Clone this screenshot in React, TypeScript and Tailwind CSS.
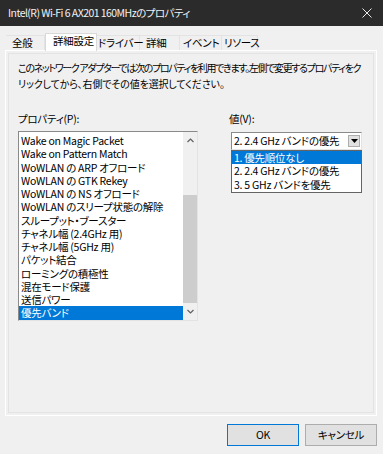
import React from "react";

const properties = [
  "Wake on Magic Packet",
  "Wake on Pattern Match",
  "WoWLAN の ARP オフロード",
  "WoWLAN の GTK Rekey",
  "WoWLAN の NS オフロード",
  "WoWLAN のスリープ状態の解除",
  "スループット・ブースター",
  "チャネル幅 (2.4GHz 用)",
  "チャネル幅 (5GHz 用)",
  "パケット結合",
  "ローミングの積極性",
  "混在モード保護",
  "送信パワー",
  "優先バンド",
];

const options = ["1. 優先順位なし", "2. 2.4 GHz バンドの優先", "3. 5 GHz バンドを優先"];

const tabs = [
  { label: "全般", w: "w-[39px]", pl: "pl-[6px]" },
  { label: "詳細設定", w: "w-[52px]", pl: "pl-[7px]", active: true },
  { label: "ドライバー", w: "w-[43px]", pl: "pl-[1px]" },
  { label: "詳細", w: "w-[40px]", pl: "pl-[6px]" },
  { label: "イベント", w: "w-[42px]", pl: "pl-[3px]" },
  { label: "リソース", w: "w-[36px]", pl: "pl-[2px]" },
];

function Chevron({ up }: { up?: boolean }) {
  return (
    <svg width="7" height="5" viewBox="0 0 7 5" className="block">
      <path
        d={up ? "M0.5 4 L3.5 1 L6.5 4" : "M0.5 1 L3.5 4 L6.5 1"}
        fill="none"
        stroke="#606060"
        strokeWidth="1.2"
      />
    </svg>
  );
}

export default function App() {
  return (
    <div className="w-[383px] h-[454px] bg-[#f0f0f0] flex flex-col overflow-hidden font-['Noto_Sans_CJK_JP',sans-serif] [font-feature-settings:'palt'] text-[10.5px] tracking-[-0.25px] text-black">
      {/* Title bar */}
      <div className="h-[26px] shrink-0 bg-[#2b2b2b] flex items-center justify-between pl-[8px] pr-[11px] text-[#f2f2f2] text-[10.5px] tracking-[-0.55px]">
        <span className="whitespace-nowrap">Intel(R) Wi-Fi 6 AX201 160MHzのプロパティ</span>
        <svg width="10" height="10" viewBox="0 0 10 10">
          <path d="M0.5 0.5 L9.5 9.5 M9.5 0.5 L0.5 9.5" stroke="#e8e8e8" strokeWidth="1" />
        </svg>
      </div>

      {/* Tabs */}
      <div className="h-[24px] shrink-0 flex items-end pl-[6px]">
        {tabs.map((t) =>
          t.active ? (
            <div
              key={t.label}
              className={`${t.w} ${t.pl} h-[18px] -mb-[1px] relative z-10 bg-white border-x border-t border-[#d9d9d9] leading-[14px] whitespace-nowrap`}
            >
              {t.label}
            </div>
          ) : (
            <div
              key={t.label}
              className={`${t.w} ${t.pl} h-[15px] border-t border-r border-[#e3e3e3] leading-[14px] whitespace-nowrap`}
            >
              {t.label}
            </div>
          )
        )}
      </div>

      {/* Page */}
      <div className="ml-[5px] w-[372px] h-[366px] shrink-0 border border-white p-[2px]">
        <div className="h-full border border-[#e3e3e3] pl-[9px] pt-[6px]">
          <div className="leading-[16px] whitespace-nowrap text-[10px]">
            <div className="tracking-[-1.33px]">
              このネットワーク アダプターでは次のプロパティを利用できます。左側で変更するプロパティをク
            </div>
            <div className="tracking-[-0.15px]">リックしてから、右側でその値を選択してください。</div>
          </div>

          <div className="flex mt-[19px]">
            {/* Property list */}
            <div className="w-[180px]">
              <div className="leading-[16px]">プロパティ(P):</div>
              <div className="mt-[4px] h-[190px] flex border-t border-l border-[#8a8a8a] border-r border-b border-r-[#e3e3e3] border-b-[#e3e3e3]">
                <div className="flex-1 bg-white pt-[2px]">
                  {properties.map((p, i) => (
                    <div
                      key={p}
                      className={`h-[13.25px] leading-[13.25px] pl-[2px] whitespace-nowrap ${
                        i === properties.length - 1 ? "bg-[#0078d7] text-white" : ""
                      }`}
                    >
                      {p}
                    </div>
                  ))}
                </div>
                <div className="w-[14px] bg-[#f0f0f0] flex flex-col">
                  <div className="h-[17px] flex items-center justify-center">
                    <Chevron up />
                  </div>
                  <div className="flex-1 flex flex-col justify-end">
                    <div className="h-[108px] bg-[#cdcdcd]" />
                  </div>
                  <div className="h-[17px] flex items-center justify-center">
                    <Chevron />
                  </div>
                </div>
              </div>
            </div>

            {/* Value */}
            <div className="ml-[31px]">
              <div className="leading-[16px]">値(V):</div>
              <div className="relative mt-[5px] ml-[2px] w-[131px] h-[18px] bg-white border-t border-l border-[#8a8a8a] border-r border-b border-r-[#e3e3e3] border-b-[#e3e3e3] flex items-center">
                <span className="pl-[2px] flex-1 whitespace-nowrap leading-[16px]">2. 2.4 GHz バンドの優先</span>
                <div className="w-[12px] h-[12px] mr-[1px] bg-[#e1e1e1] border border-[#adadad] flex items-center justify-center">
                  <svg width="7" height="4" viewBox="0 0 7 4">
                    <path d="M0 0 L7 0 L3.5 4 Z" fill="#000" />
                  </svg>
                </div>

                {/* Open dropdown */}
                <div className="absolute left-[-1px] top-[17px] w-[131px] bg-white border border-[#646464] pb-[1px] z-20">
                  {options.map((o, i) => (
                    <div
                      key={o}
                      className={`h-[13.3px] leading-[13.3px] pl-[2px] whitespace-nowrap ${
                        i === 0 ? "bg-[#0078d7] text-white" : ""
                      }`}
                    >
                      {o}
                    </div>
                  ))}
                </div>
              </div>
            </div>
          </div>
        </div>
      </div>

      {/* Buttons */}
      <div className="mt-[8px] flex justify-end gap-[6px] pr-[6px]">
        <button className="w-[72px] h-[22px] bg-[#e1e1e1] border border-[#0078d7]">OK</button>
        <button className="w-[72px] h-[22px] bg-[#e1e1e1] border border-[#adadad]">キャンセル</button>
      </div>
    </div>
  );
}
